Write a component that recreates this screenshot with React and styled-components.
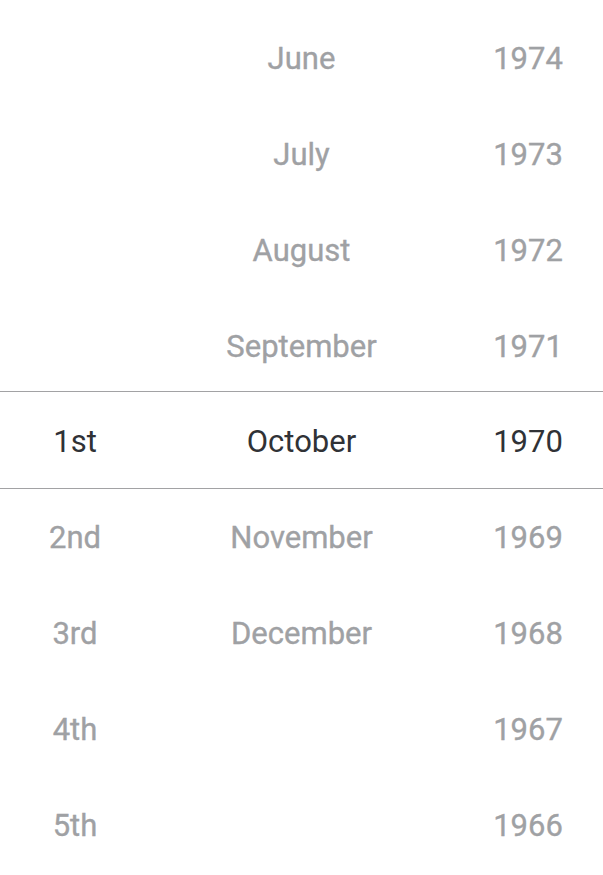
import React from "react";
import styled, { createGlobalStyle } from "styled-components";

const GlobalStyle = createGlobalStyle`
  html, body {
    margin: 0;
    padding: 0;
    background: #ffffff;
  }
  body {
    font-family: Roboto, "Noto Sans", sans-serif;
  }
`;

const days = ["", "", "", "", "1st", "2nd", "3rd", "4th", "5th"];
const months = [
  "June",
  "July",
  "August",
  "September",
  "October",
  "November",
  "December",
  "",
  "",
];
const years = ["1974", "1973", "1972", "1971", "1970", "1969", "1968", "1967", "1966"];
const SELECTED = 4;

// rows above the selection sit a bit lower, like on a wheel
const placeOf = (i) => (i < SELECTED ? "above" : i === SELECTED ? "selected" : "below");

export default function App() {
  return (
    <>
      <GlobalStyle />
      <Wheel>
        {years.map((year, i) => (
          <Row key={year} $place={placeOf(i)}>
            <Cell $selected={i === SELECTED}>{days[i]}</Cell>
            <Cell $selected={i === SELECTED}>{months[i]}</Cell>
            <Cell $selected={i === SELECTED}>{year}</Cell>
          </Row>
        ))}
      </Wheel>
    </>
  );
}

const Wheel = styled.div`
  width: 603px;
  height: 875px;
  padding-top: 7px;
  box-sizing: border-box;
  overflow: hidden;
  display: flex;
  flex-direction: column;
`;

const Row = styled.div`
  display: grid;
  grid-template-columns: 150px 303px 150px;
  align-items: center;
  height: ${(p) => (p.$place === "selected" ? "98px" : "96px")};
  padding-top: ${(p) =>
    p.$place === "above" ? "7px" : p.$place === "selected" ? "2px" : "1px"};
  box-sizing: border-box;
  flex-shrink: 0;
  border-top: ${(p) => (p.$place === "selected" ? "1px solid #a2a2a4" : "none")};
  border-bottom: ${(p) => (p.$place === "selected" ? "1px solid #a2a2a4" : "none")};
`;

const Cell = styled.div`
  text-align: center;
  font-size: 31px;
  line-height: 1;
  font-weight: 400;
  color: ${(p) => (p.$selected ? "#303236" : "#9fa1a4")};
  -webkit-text-stroke: ${(p) => (p.$selected ? "0" : "0.35px #9fa1a4")};
`;
